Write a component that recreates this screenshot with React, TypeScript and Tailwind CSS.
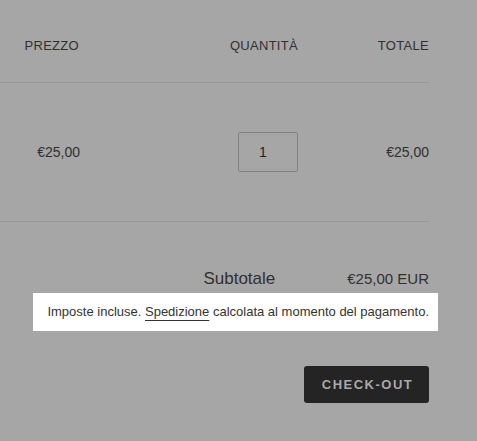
import React from "react";

export default function App() {
  const font = { fontFamily: '"Liberation Sans", Arial, sans-serif' };
  return (
    <div className="w-[477px] h-[441px] bg-[#a6a6a6] overflow-hidden text-[#303030]" style={font}>
      <div className="w-[429px]">
        {/* header */}
        <div className="flex pt-[38px] pb-[28px] border-b border-[#999999] text-[13px] leading-[16px] uppercase tracking-[0.3px]">
          <div className="w-[80px] text-right pr-[1px]">Prezzo</div>
          <div className="w-[218px] text-right">Quantità</div>
          <div className="flex-1 text-right">Totale</div>
        </div>
        {/* item row */}
        <div className="flex items-center pt-[49px] pb-[49px] border-b border-[#999999] text-[14px] leading-[16px]">
          <div className="w-[80px] text-right">€25,00</div>
          <div className="w-[218px] flex justify-end">
            <div className="w-[60px] h-[40px] border border-[#828282] rounded-[2px] flex items-center justify-center text-[14px] text-[#1f1f1f] pr-[10px]">
              1
            </div>
          </div>
          <div className="flex-1 text-right">€25,00</div>
        </div>
      </div>
      {/* subtotal */}
      <div className="w-[429px] flex justify-end items-baseline pt-[47px] leading-[20px]">
        <span className="text-[17px]">Subtotale</span>
        <span className="text-[15px] ml-[72px]">€25,00 EUR</span>
      </div>
      <div className="flex justify-end pr-[39px] mt-[4px]">
        <div className="h-[38px] bg-white flex items-center pl-[14px] pr-[9px] text-[13px] text-[#333333]">
          <span>
            Imposte incluse.{" "}
            <span className="underline decoration-[#333333] underline-offset-[4px]">Spedizione</span> calcolata al momento del pagamento.
          </span>
        </div>
      </div>
      <div className="w-[429px] flex justify-end mt-[35px]">
        <div className="w-[125px] h-[37px] bg-[#242424] rounded-[3px] flex items-center justify-center text-[13px] font-bold tracking-[1.5px] text-[#a9a9a9] pl-[2px]">
          CHECK-OUT
        </div>
      </div>
    </div>
  );
}
